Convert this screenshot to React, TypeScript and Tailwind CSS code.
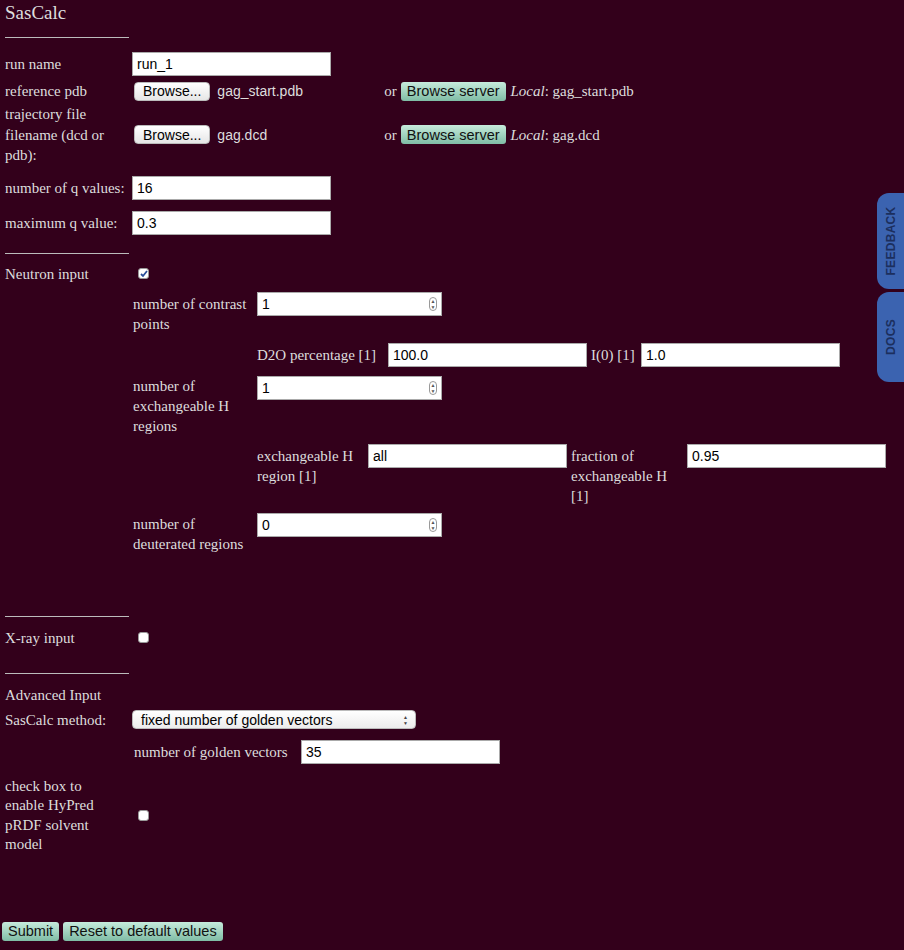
const sans = { fontFamily: '"Liberation Sans", Arial, sans-serif' };

function TextInput({ value, w }: { value: string; w: string }) {
  return (
    <div className={`${w} h-[24px] shrink-0 bg-white border border-[#aaa] px-[4px] flex items-center text-[14px] text-black`} style={sans}>
      {value}
    </div>
  );
}

function Spin({ value }: { value: string }) {
  return (
    <div className="w-[185px] h-[24px] shrink-0 bg-white border border-[#aaa] px-[4px] flex items-center justify-between text-[14px] text-black" style={sans}>
      <span>{value}</span>
      <span className="w-[8px] h-[14px] border border-[#999] rounded-[4px] flex flex-col items-center justify-center text-[5px] leading-[6px] text-[#555]">
        <span>▲</span><span>▼</span>
      </span>
    </div>
  );
}

function Check({ on }: { on?: boolean }) {
  return (
    <div className="w-[11px] h-[11px] rounded-[3px] bg-white border border-[#999] flex items-center justify-center">
      {on && (
        <svg width="8" height="8" viewBox="0 0 8 8"><path d="M1 4l2 2 4-5" stroke="#2a4f9a" strokeWidth="1.8" fill="none" /></svg>
      )}
    </div>
  );
}

function FileBtn() {
  return (
    <span className="inline-flex items-center h-[19px] px-[8px] rounded-[4px] bg-gradient-to-b from-white to-[#e6e6e6] border border-[#bbb] text-[14px] text-black" style={sans}>
      Browse...
    </span>
  );
}

function GreenBtn({ label }: { label: string }) {
  return (
    <span className="inline-flex items-center h-[19px] px-[6px] rounded-[3px] bg-gradient-to-b from-[#c6ebdc] to-[#7fbca5] text-[14.5px] text-[#111]" style={sans}>
      {label}
    </span>
  );
}

function Rule({ mt }: { mt: string }) {
  return <div className={`${mt} ml-[5px] w-[124px] h-px bg-[#bbb]`} />;
}

export default function App() {
  return (
    <div className="relative w-[904px] h-[950px] bg-[#33001b] text-[#ddd] text-[15px] leading-[20px] overflow-hidden" style={{ fontFamily: '"Liberation Serif", "Times New Roman", serif' }}>
      <div className="h-[26px] pl-[5px] text-[19px] leading-[26px]">SasCalc</div>
      <Rule mt="mt-[11px]" />

      <div className="mt-[14px] h-[24px] flex items-center">
        <div className="w-[132px] pl-[5px]">run name</div>
        <TextInput value="run_1" w="w-[199px]" />
      </div>
      <div className="mt-[4px] h-[22px] flex items-center">
        <div className="w-[134px] pl-[5px]">reference pdb</div>
        <FileBtn />
        <span className="ml-[7px] w-[167px] text-[14px]" style={sans}>gag_start.pdb</span>
        <span>or</span>
        <span className="ml-[4px]"><GreenBtn label="Browse server" /></span>
        <span className="ml-[5px]"><i>Local</i>: gag_start.pdb</span>
      </div>
      <div className="mt-[2px] flex items-center">
        <div className="w-[134px] pl-[5px] pr-[6px] leading-[20.5px]">trajectory file filename (dcd or pdb):</div>
        <FileBtn />
        <span className="ml-[7px] w-[167px] text-[14px]" style={sans}>gag.dcd</span>
        <span>or</span>
        <span className="ml-[4px]"><GreenBtn label="Browse server" /></span>
        <span className="ml-[5px]"><i>Local</i>: gag.dcd</span>
      </div>
      <div className="mt-[2px] h-[40px] flex items-center">
        <div className="w-[132px] pl-[5px] pr-[4px]">number of q values:</div>
        <TextInput value="16" w="w-[199px]" />
      </div>
      <div className="mt-[3px] h-[24px] flex items-center">
        <div className="w-[132px] pl-[5px] whitespace-nowrap">maximum q value:</div>
        <TextInput value="0.3" w="w-[199px]" />
      </div>
      <Rule mt="mt-[18px]" />

      <div className="mt-[10px] h-[20px] flex items-center">
        <div className="w-[138px] pl-[5px]">Neutron input</div>
        <Check on />
      </div>

      <div className="pl-[133px]">
        <div className="mt-[8px] h-[44px] flex items-start">
          <div className="w-[124px] pr-[4px] pt-[2px]">number of contrast points</div>
          <Spin value="1" />
        </div>
        <div className="mt-[7px] pl-[124px] h-[24px] flex items-center">
          <span className="w-[131px]">D2O percentage [1]</span>
          <TextInput value="100.0" w="w-[199px]" />
          <span className="ml-[4px] w-[50px]">I(0) [1]</span>
          <TextInput value="1.0" w="w-[199px]" />
        </div>
        <div className="mt-[9px] h-[60px] flex items-start">
          <div className="w-[124px] pr-[4px]">number of exchangeable H regions</div>
          <Spin value="1" />
        </div>
        <div className="mt-[8px] h-[62px] pl-[124px] flex items-start">
          <div className="w-[111px] pt-[2px]">exchangeable H region [1]</div>
          <TextInput value="all" w="w-[199px]" />
          <div className="ml-[4px] w-[116px] pr-[4px] pt-[2px]">fraction of exchangeable H [1]</div>
          <TextInput value="0.95" w="w-[199px]" />
        </div>
        <div className="mt-[7px] h-[44px] flex items-start">
          <div className="w-[124px] pr-[4px] pt-[1px]">number of deuterated regions</div>
          <Spin value="0" />
        </div>
      </div>

      <Rule mt="mt-[59px]" />
      <div className="mt-[11px] h-[20px] flex items-center">
        <div className="w-[138px] pl-[5px]">X-ray input</div>
        <Check />
      </div>
      <Rule mt="mt-[25px]" />

      <div className="mt-[11px] h-[20px] pl-[5px]">Advanced Input</div>
      <div className="mt-[5px] h-[20px] flex items-center">
        <div className="w-[132px] pl-[5px]">SasCalc method:</div>
        <div className="w-[284px] h-[19px] rounded-[4px] bg-gradient-to-b from-white to-[#ececec] border border-[#bbb] flex items-center justify-between pl-[8px] pr-[7px] text-[14px] text-black" style={sans}>
          <span>fixed number of golden vectors</span>
          <span className="flex flex-col text-[5px] leading-[6px] text-[#444]"><span>▲</span><span>▼</span></span>
        </div>
      </div>
      <div className="mt-[10px] h-[24px] pl-[134px] flex items-center">
        <span className="w-[167px] whitespace-nowrap">number of golden vectors</span>
        <TextInput value="35" w="w-[199px]" />
      </div>
      <div className="mt-[13px] flex items-center">
        <div className="w-[138px] pl-[5px] pr-[30px] leading-[19.5px]">check box to enable HyPred pRDF solvent model</div>
        <Check />
      </div>

      <div className="mt-[67px] pl-[2px] flex gap-[4px]">
        <GreenBtn label="Submit" />
        <GreenBtn label="Reset to default values" />
      </div>

      <div className="absolute right-0 top-[193px] w-[27px] h-[96px] bg-[#3b63b0] rounded-l-[12px] flex items-center justify-center">
        <span className="-rotate-90 text-[12px] font-bold text-[#1c2f5e] tracking-wide" style={sans}>FEEDBACK</span>
      </div>
      <div className="absolute right-0 top-[292px] w-[27px] h-[90px] bg-[#3b63b0] rounded-l-[12px] flex items-center justify-center">
        <span className="-rotate-90 text-[12px] font-bold text-[#1c2f5e] tracking-wide" style={sans}>DOCS</span>
      </div>
    </div>
  );
}
